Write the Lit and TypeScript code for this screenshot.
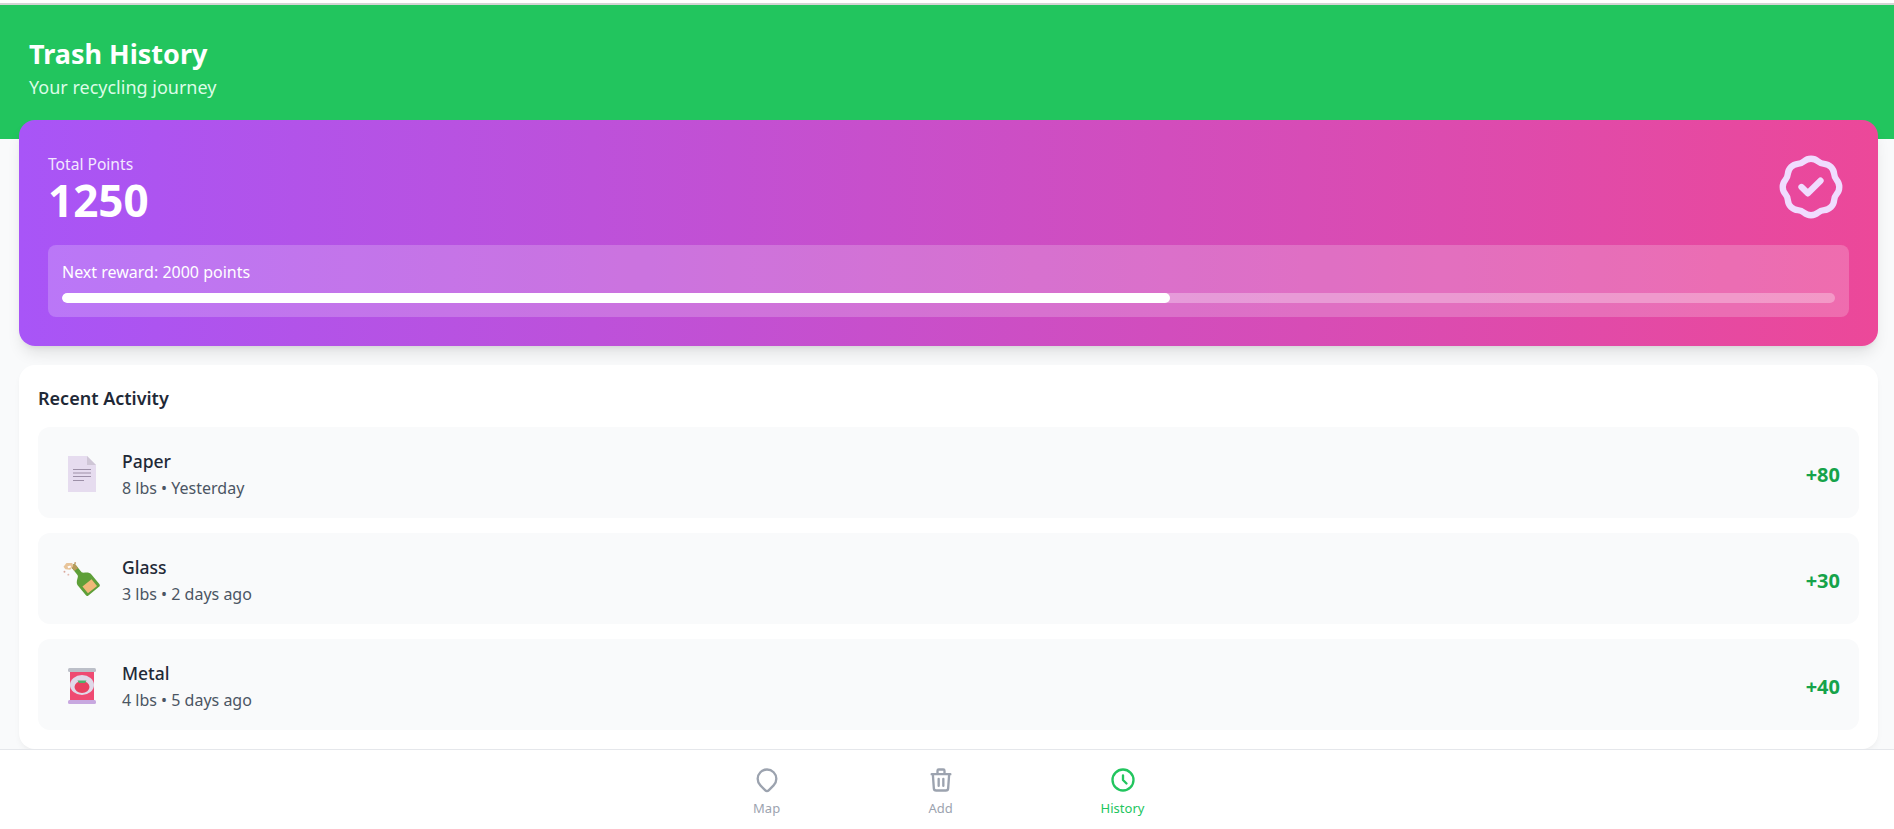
import { LitElement, html, css, svg } from 'lit';
import { customElement } from 'lit/decorators.js';

const paperIcon = svg`
  <path d="M0 0h19l9 9v27H0z" fill="#e6dcef"/>
  <path d="M19 0l9 9h-9z" fill="#cfc6d6"/>
  <g stroke="#9d90a8" stroke-width="1.200">
    <path d="M5 13.500h18M5 17h18M5 20.500h18M5 24.500h11"/>
  </g>`;

const glassIcon = svg`
  <g transform="rotate(-39 29 23.500)">
    <path d="M26.500 5h5v11c0 3 6.500 3.500 6.500 9v12.500a2 2 0 0 1-2 2H22a2 2 0 0 1-2-2V25c0-5.500 6.500-6 6.500-9z" fill="#5e9f38"/>
    <path d="M23 28.500h12v9H23z" fill="#f0b878"/>
    <path d="M26.500 5h5v6h-5z" fill="#b79a5a"/>
  </g>
  <path d="M8 11l3-4 6 0 1 3-3 4-5-.5z" fill="#e8c49a"/>
  <path d="M12 10.500l3-1 1 2-3 1z" fill="#fff"/>
  <circle cx="20" cy="7" r="1" fill="#c9a27a"/>
  <circle cx="9" cy="16" r="1" fill="#d9a89c"/>
  <circle cx="13" cy="19" r="1" fill="#e3b8ac"/>`;

const canIcon = svg`
  <rect x="2" y="3" width="24" height="30" fill="#ef4a72"/>
  <ellipse cx="14" cy="17" rx="12" ry="10" fill="#e0d8e8"/>
  <ellipse cx="14" cy="19" rx="7.500" ry="6" fill="#e8405f"/>
  <path d="M9.500 12.500h9l-1.500 2.500h-6z" fill="#4fb06a"/>
  <rect x="0" y="0" width="28" height="4" rx="1.500" fill="#bcbfc8"/>
  <rect x="0" y="32" width="28" height="4" rx="1.500" fill="#c8a8e0"/>`;

@customElement('app-root')
export class AppRoot extends LitElement {
  static styles = css`
    :host {
      display: block;
      min-height: 829px;
      background: #f9fafb;
      font-family: 'Noto Sans', 'Open Sans', sans-serif;
      color: #1f2937;
    }
    .topline {
      height: 5px;
      box-sizing: border-box;
      background: #fff;
      border-bottom: 2px solid #d4d4d4;
    }
    header {
      background: #22c55e;
      color: #fff;
      padding: 31px 29px 0;
      height: 134px;
      box-sizing: border-box;
    }
    h1 {
      margin: 0;
      font-size: 27px;
      line-height: 36px;
      font-weight: 700;
    }
    .sub {
      margin-top: 3px;
      font-size: 18px;
      line-height: 24px;
      color: #dcfce7;
    }
    main {
      padding: 0 16px 0 19px;
      margin-top: -19px;
    }
    .points {
      height: 226px;
      box-sizing: border-box;
      padding: 33px 29px 0;
      border-radius: 16px;
      background: linear-gradient(90deg, #a855f7, #ec4899);
      box-shadow: 0 10px 15px -3px rgba(0, 0, 0, 0.1), 0 4px 6px -4px rgba(0, 0, 0, 0.1);
      color: #fff;
    }
    .points-top {
      display: flex;
      justify-content: space-between;
      align-items: flex-start;
      height: 92px;
    }
    .label {
      font-size: 15.600px;
      line-height: 22px;
      color: #f3e8ff;
    }
    .total {
      font-size: 44px;
      line-height: 50px;
      font-weight: 700;
    }
    .badge {
      width: 76px;
      height: 76px;
      margin-top: -4px;
      color: #f0dcff;
    }
    .reward {
      background: rgba(255, 255, 255, 0.2);
      border-radius: 8px;
      height: 72px;
      box-sizing: border-box;
      padding: 16px 14px 0;
    }
    .reward-text {
      font-size: 16px;
      line-height: 22px;
    }
    .track {
      margin-top: 10px;
      height: 10px;
      border-radius: 5px;
      background: rgba(255, 255, 255, 0.3);
      overflow: hidden;
    }
    .fill {
      height: 100%;
      border-radius: 5px;
      background: #fff;
    }
    .activity {
      margin-top: 19px;
      height: 384px;
      box-sizing: border-box;
      background: #fff;
      border-radius: 16px;
      padding: 21px 19px 19px;
      box-shadow: 0 4px 6px -1px rgba(0, 0, 0, 0.05);
    }
    h2 {
      margin: 0 0 17px;
      font-size: 18px;
      line-height: 24px;
      font-weight: 600;
      color: #1f2937;
    }
    .rows {
      display: flex;
      flex-direction: column;
      gap: 15px;
    }
    .row {
      display: flex;
      align-items: center;
      height: 91px;
      box-sizing: border-box;
      padding: 3px 19px 0 30px;
      background: #f9fafb;
      border-radius: 12px;
    }
    .icon {
      width: 28px;
      height: 36px;
      margin-right: 26px;
      flex: none;
    }
    .glass {
      width: 37px;
      margin-left: -5px;
      margin-right: 22px;
    }
    .info {
      flex: 1;
    }
    .name {
      font-size: 17.500px;
      line-height: 24px;
      font-weight: 500;
      color: #1f2937;
    }
    .meta {
      margin-top: 3px;
      font-size: 16px;
      line-height: 24px;
      color: #4b5563;
    }
    .pts {
      font-size: 20px;
      font-weight: 700;
      color: #16a34a;
    }
    nav {
      display: flex;
      justify-content: center;
      gap: 146px;
      height: 80px;
      box-sizing: border-box;
      background: #fff;
      border-top: 1px solid #e5e7eb;
      padding: 16px 0 0 3px;
      color: #9ca3af;
    }
    .item {
      display: flex;
      flex-direction: column;
      align-items: center;
      font-size: 13px;
      line-height: 18px;
      gap: 5px;
    }
    .item svg {
      width: 28px;
      height: 28px;
    }
    .item.active {
      color: #22c55e;
    }
  `;

  private rows = [
    { name: 'Paper', meta: '8 lbs • Yesterday', pts: '+80', icon: paperIcon, box: '0 0 28 36', cls: '' },
    { name: 'Glass', meta: '3 lbs • 2 days ago', pts: '+30', icon: glassIcon, box: '8 6 37 37', cls: 'glass' },
    { name: 'Metal', meta: '4 lbs • 5 days ago', pts: '+40', icon: canIcon, box: '0 0 28 36', cls: '' },
  ];

  render() {
    return html`
      <div class="topline"></div>
      <header>
        <h1>Trash History</h1>
        <div class="sub">Your recycling journey</div>
      </header>
      <main>
        <section class="points">
          <div class="points-top">
            <div>
              <div class="label">Total Points</div>
              <div class="total">1250</div>
            </div>
            <svg class="badge" viewBox="0 0 24 24" fill="none" stroke="currentColor" stroke-width="2" stroke-linecap="round" stroke-linejoin="round">
              <path d="M9 12l2 2 4-4M7.835 4.697a3.42 3.42 0 0 0 1.946-.806 3.42 3.42 0 0 1 4.438 0 3.42 3.42 0 0 0 1.946.806 3.42 3.42 0 0 1 3.138 3.138 3.42 3.42 0 0 0 .806 1.946 3.42 3.42 0 0 1 0 4.438 3.42 3.42 0 0 0-.806 1.946 3.42 3.42 0 0 1-3.138 3.138 3.42 3.42 0 0 0-1.946.806 3.42 3.42 0 0 1-4.438 0 3.42 3.42 0 0 0-1.946-.806 3.42 3.42 0 0 1-3.138-3.138 3.42 3.42 0 0 0-.806-1.946 3.42 3.42 0 0 1 0-4.438 3.42 3.42 0 0 0 .806-1.946 3.42 3.42 0 0 1 3.138-3.138z"/>
            </svg>
          </div>
          <div class="reward">
            <div class="reward-text">Next reward: 2000 points</div>
            <div class="track"><div class="fill" style="width: ${(1250 / 2000) * 100}%"></div></div>
          </div>
        </section>
        <section class="activity">
          <h2>Recent Activity</h2>
          <div class="rows">
            ${this.rows.map(
              (r) => html`
                <div class="row">
                  <svg class="icon ${r.cls}" viewBox=${r.box}>${r.icon}</svg>
                  <div class="info">
                    <div class="name">${r.name}</div>
                    <div class="meta">${r.meta}</div>
                  </div>
                  <div class="pts">${r.pts}</div>
                </div>
              `
            )}
          </div>
        </section>
      </main>
      <nav>
        <div class="item">
          <svg viewBox="0 0 24 24" fill="none" stroke="currentColor" stroke-width="2" stroke-linecap="round" stroke-linejoin="round">
            <path d="M17.657 16.657L13.414 20.900a1.998 1.998 0 0 1-2.827 0l-4.244-4.243a8 8 0 1 1 11.314 0z"/>
          </svg>
          Map
        </div>
        <div class="item">
          <svg viewBox="0 0 24 24" fill="none" stroke="currentColor" stroke-width="2" stroke-linecap="round" stroke-linejoin="round">
            <path d="M19 7l-.867 12.142A2 2 0 0 1 16.138 21H7.862a2 2 0 0 1-1.995-1.858L5 7m5 4v6m4-6v6m1-10V4a1 1 0 0 0-1-1h-4a1 1 0 0 0-1 1v3M4 7h16"/>
          </svg>
          Add
        </div>
        <div class="item active">
          <svg viewBox="0 0 24 24" fill="none" stroke="currentColor" stroke-width="2" stroke-linecap="round" stroke-linejoin="round">
            <path d="M12 8v4l3 3m6-3a9 9 0 1 1-18 0 9 9 0 0 1 18 0z"/>
          </svg>
          History
        </div>
      </nav>
    `;
  }
}
